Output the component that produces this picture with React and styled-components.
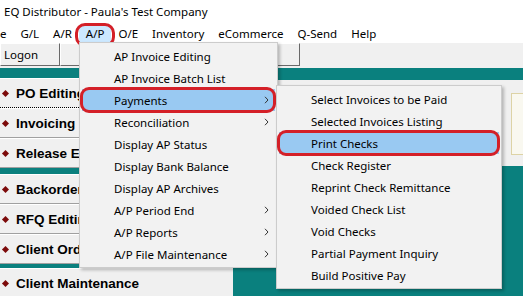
import React from "react";
import styled, { createGlobalStyle } from "styled-components";

const GlobalStyle = createGlobalStyle`
  html, body {
    margin: 0;
    padding: 0;
  }
  body {
    width: 523px;
    height: 296px;
    overflow: hidden;
    background: #f0f0f0;
    font-family: "Noto Sans", "Open Sans", sans-serif;
    color: #000;
  }
`;

const Window = styled.div`
  position: relative;
  width: 523px;
  height: 296px;
  overflow: hidden;
  display: flex;
  flex-direction: column;
`;

const TitleBar = styled.div`
  height: 22px;
  flex: none;
  background: #fff;
  font-size: 11.5px;
  line-height: 24px;
  padding-left: 4px;
`;

const MenuBar = styled.div`
  height: 21px;
  flex: none;
  background: #fff;
  display: flex;
  align-items: flex-end;
  margin-left: -19px;
  font-size: 11.5px;
`;

const MenuBarItem = styled.div`
  position: relative;
  padding: 0 7px;
  height: 18px;
  line-height: 18px;
  background: ${(p) => (p.$open ? "#cce8ff" : "transparent")};

  &::after {
    content: "";
    display: ${(p) => (p.$marked ? "block" : "none")};
    position: absolute;
    inset: -2px -4px -4px -4px;
    border: 3px solid #d42028;
    border-radius: 10px;
  }
`;

const Toolbar = styled.div`
  height: 25px;
  flex: none;
  background: #f0f0f0;
  display: flex;
  align-items: flex-start;
`;

const ToolButton = styled.div`
  width: ${(p) => p.$w}px;
  height: 23px;
  box-sizing: border-box;
  border-top: 1px solid #fff;
  border-left: 1px solid #fff;
  border-right: 1px solid #696969;
  border-bottom: 1px solid #696969;
  font-size: 11.5px;
  line-height: 21px;
  padding-left: 3px;
`;

const Workspace = styled.div`
  flex: 1;
  display: flex;
  background: #0a807e;
`;

const LeftPanel = styled.div`
  width: 233px;
  flex: none;
  padding-top: 10px;
  display: flex;
  flex-direction: column;
`;

const NavGroup = styled.div`
  display: flex;
  flex-direction: column;
  margin-bottom: ${(p) => p.$gap || 0}px;
`;

const NavButton = styled.div`
  height: 30px;
  box-sizing: border-box;
  display: flex;
  align-items: center;
  background: #f0f0f0;
  border-top: 1px solid #fff;
  border-bottom: 1px ${(p) => (p.$focused ? "dotted #000" : "solid #a0a0a0")};
  font-family: "Liberation Sans", Arial, sans-serif;
  font-weight: bold;
  font-size: 13.5px;
  white-space: nowrap;
  overflow: hidden;
`;

const Bullet = styled.span`
  width: 5px;
  height: 5px;
  margin: 0 8px 0 3px;
  background: #7c0a0a;
  transform: rotate(45deg);
  flex: none;
`;

const MainArea = styled.div`
  flex: 1;
  display: flex;
  flex-direction: column;
  overflow: hidden;
`;

const ContentPanel = styled.div`
  margin-top: 12px;
  height: 86px;
  background: #f0f0f0;
  padding-top: 13px;
  box-sizing: border-box;
`;

const InfoBox = styled.div`
  margin-left: 278px;
  width: 200px;
  height: 60px;
  border: 1px solid #ddd3a6;
  background: #f9f8f0;
`;

const Menu = styled.div`
  position: absolute;
  left: ${(p) => p.$x}px;
  top: ${(p) => p.$y}px;
  width: ${(p) => p.$w}px;
  box-sizing: border-box;
  padding: 2px;
  background: #f2f2f2;
  border: 1px solid #cccccc;
  box-shadow: 2px 2px 3px rgba(0, 0, 0, 0.25);
  font-size: 11.5px;
`;

const MenuRow = styled.div`
  position: relative;
  height: 22px;
  display: flex;
  align-items: center;
  padding-left: 32px;
  padding-right: 6px;
  background: ${(p) => (p.$active ? "#99c9f2" : "transparent")};
  white-space: nowrap;

  &::after {
    content: "";
    display: ${(p) => (p.$marked ? "block" : "none")};
    position: absolute;
    inset: -2px -1px -2px -2px;
    border: 3px solid #d42028;
    border-radius: 9px;
  }
`;

const Chevron = styled.svg`
  margin-left: auto;
  flex: none;
`;

const apItems = [
  { label: "AP Invoice Editing" },
  { label: "AP Invoice Batch List" },
  { label: "Payments", sub: true, active: true },
  { label: "Reconciliation", sub: true },
  { label: "Display AP Status" },
  { label: "Display Bank Balance" },
  { label: "Display AP Archives" },
  { label: "A/P Period End", sub: true },
  { label: "A/P Reports", sub: true },
  { label: "A/P File Maintenance", sub: true },
];

const paymentItems = [
  { label: "Select Invoices to be Paid" },
  { label: "Selected Invoices Listing" },
  { label: "Print Checks", active: true },
  { label: "Check Register" },
  { label: "Reprint Check Remittance" },
  { label: "Voided Check List" },
  { label: "Void Checks" },
  { label: "Partial Payment Inquiry" },
  { label: "Build Positive Pay" },
];

const navGroups = [
  { gap: 6, items: [{ label: "PO Editing", focused: true }, { label: "Invoicing" }, { label: "Release Editing" }] },
  { gap: 4, items: [{ label: "Backorder Editing" }, { label: "RFQ Editing" }, { label: "Client Orders" }] },
  { gap: 0, items: [{ label: "Client Maintenance" }] },
];

function SubArrow() {
  return (
    <Chevron width="5" height="8" viewBox="0 0 5 8">
      <polyline points="1,0.8 4,4 1,7.2" fill="none" stroke="#333" strokeWidth="1" />
    </Chevron>
  );
}

function MenuList({ items, x, y, w }) {
  return (
    <Menu $x={x} $y={y} $w={w}>
      {items.map((item) => (
        <MenuRow key={item.label} $active={item.active} $marked={item.active}>
          {item.label}
          {item.sub && <SubArrow />}
        </MenuRow>
      ))}
    </Menu>
  );
}

export default function App() {
  const menus = ["File", "G/L", "A/R", "A/P", "O/E", "Inventory", "eCommerce", "Q-Send", "Help"];
  return (
    <Window>
      <GlobalStyle />
      <TitleBar>EQ Distributor - Paula's Test Company</TitleBar>
      <MenuBar>
        {menus.map((m) => (
          <MenuBarItem key={m} $open={m === "A/P"} $marked={m === "A/P"}>
            {m}
          </MenuBarItem>
        ))}
      </MenuBar>
      <Toolbar>
        <ToolButton $w={60}>Logon</ToolButton>
        <ToolButton $w={240} />
      </Toolbar>
      <Workspace>
        <LeftPanel>
          {navGroups.map((group, i) => (
            <NavGroup key={i} $gap={group.gap}>
              {group.items.map((item) => (
                <NavButton key={item.label} $focused={item.focused}>
                  <Bullet />
                  {item.label}
                </NavButton>
              ))}
            </NavGroup>
          ))}
        </LeftPanel>
        <MainArea>
          <ContentPanel>
            <InfoBox />
          </ContentPanel>
        </MainArea>
      </Workspace>
      <MenuList items={apItems} x={79} y={42} w={199} />
      <MenuList items={paymentItems} x={276} y={85} w={226} />
    </Window>
  );
}
